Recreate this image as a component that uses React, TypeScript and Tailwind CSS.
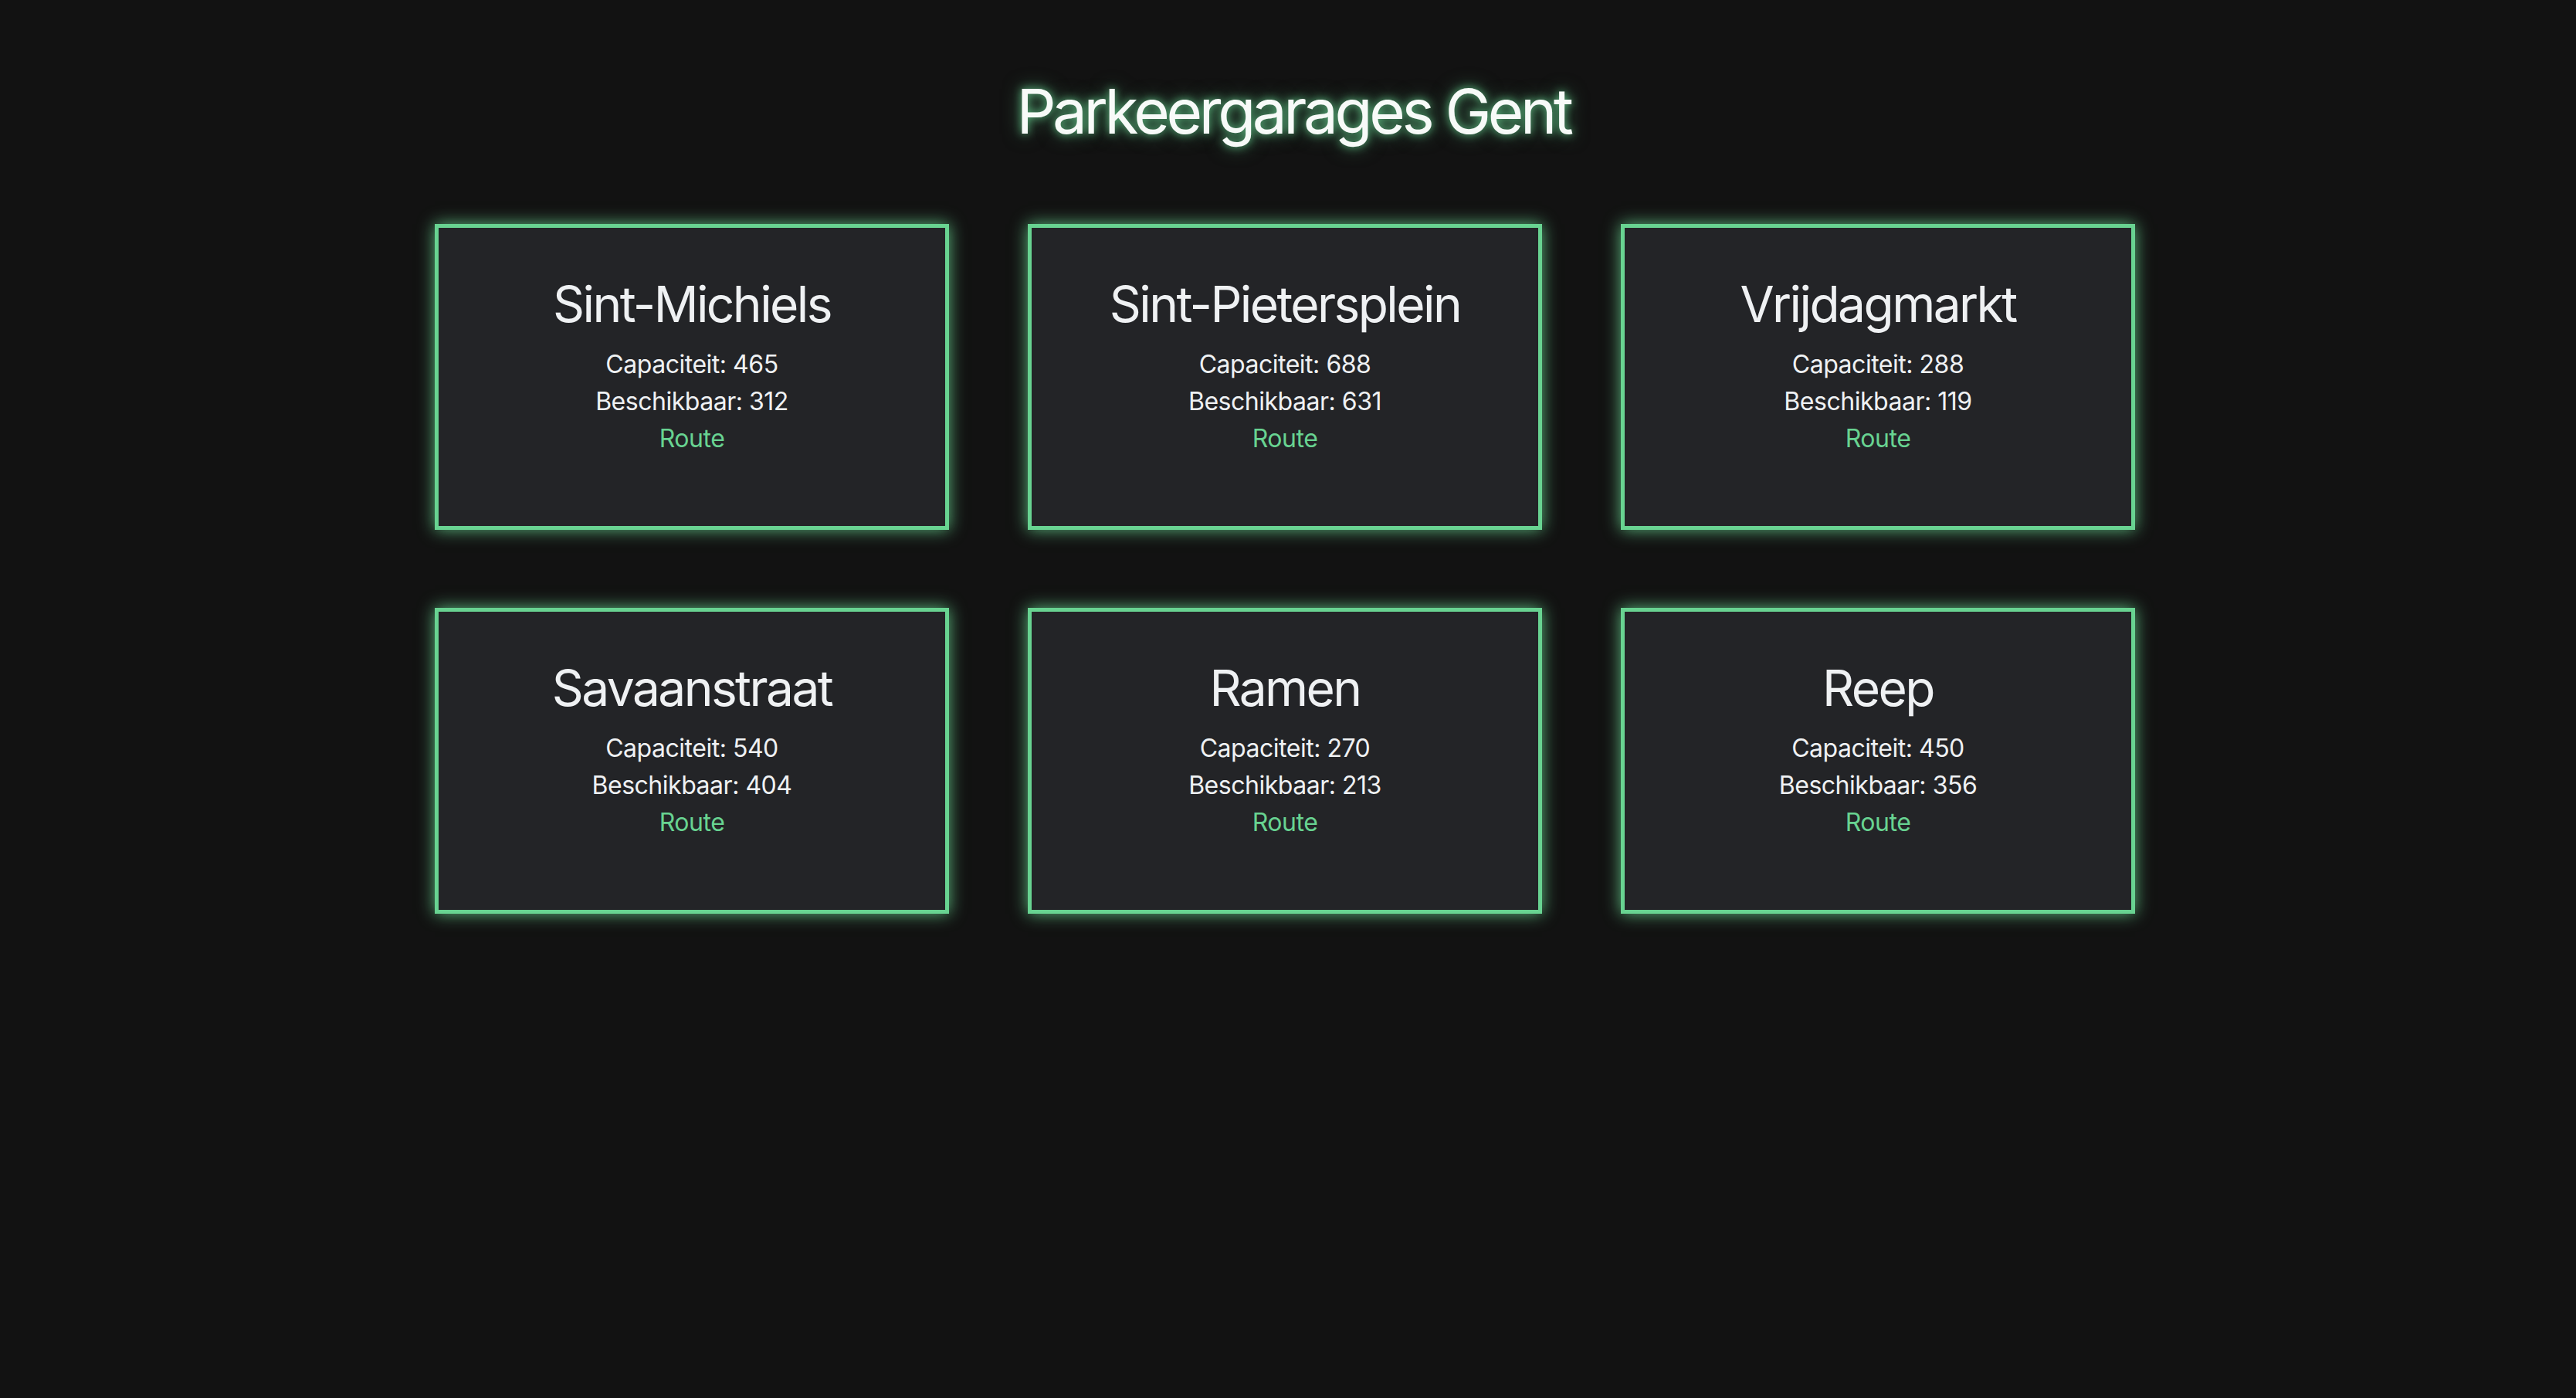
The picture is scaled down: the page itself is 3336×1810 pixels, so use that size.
import React from 'react';

interface Garage {
  name: string;
  capacity: number;
  available: number;
}

const garages: Garage[] = [
  { name: 'Sint-Michiels', capacity: 465, available: 312 },
  { name: 'Sint-Pietersplein', capacity: 688, available: 631 },
  { name: 'Vrijdagmarkt', capacity: 288, available: 119 },
  { name: 'Savaanstraat', capacity: 540, available: 404 },
  { name: 'Ramen', capacity: 270, available: 213 },
  { name: 'Reep', capacity: 450, available: 356 },
];

const GarageCard: React.FC<{ garage: Garage }> = ({ garage }) => (
  <div className="h-[396px] bg-[#232427] border-[5px] border-[#68d391] shadow-[0_0_20px_rgba(104,211,145,0.85)] text-center pt-[61px]">
    <h2 className="text-[64px] leading-[1.2] tracking-[-0.04em] text-[#eff1f3] font-normal">{garage.name}</h2>
    <div className="mt-[15px] text-[32px] leading-[48px] tracking-[-0.015em] text-[#eff1f3]">
      <p>Capaciteit: {garage.capacity}</p>
      <p>Beschikbaar: {garage.available}</p>
      <a href="#" className="text-[#68d391]">Route</a>
    </div>
  </div>
);

export default function App() {
  return (
    <div className="min-h-screen bg-[#121212] pt-[96px] font-['Inter','Noto_Sans',sans-serif]">
      <h1 className="pl-[14px] text-center text-[80px] leading-[1.2] tracking-[-0.055em] text-[#f7faf8] [text-shadow:0_0_12px_rgba(104,211,145,0.9),0_0_24px_rgba(104,211,145,0.5)]">
        Parkeergarages Gent
      </h1>
      <div className="mt-[98px] pr-[8px] grid grid-cols-[repeat(3,666px)] justify-center gap-x-[102px] gap-y-[101px]">
        {garages.map((g) => (
          <GarageCard key={g.name} garage={g} />
        ))}
      </div>
    </div>
  );
}
